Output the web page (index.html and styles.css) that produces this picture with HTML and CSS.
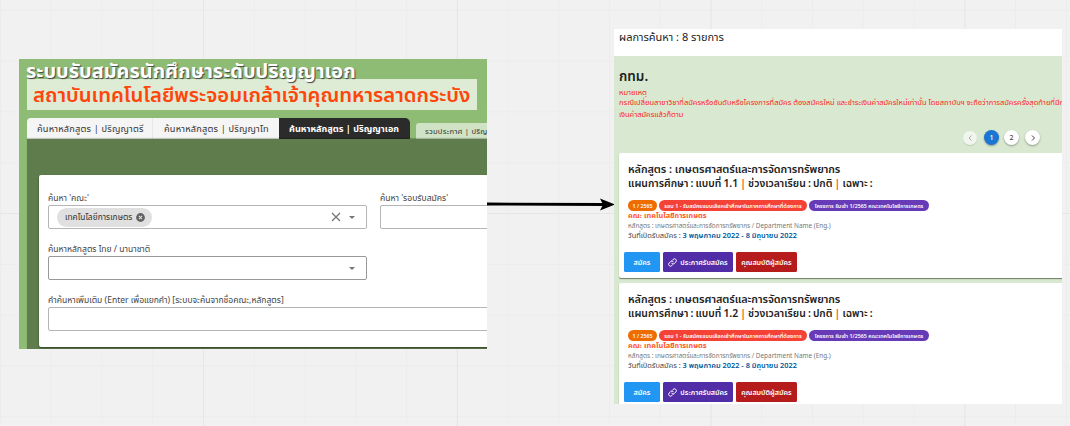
FILE: index.html
```html
<!DOCTYPE html>
<html lang="th">
<head>
<meta charset="utf-8">
<title>ระบบรับสมัครนักศึกษาระดับปริญญาเอก</title>
<link rel="stylesheet" href="styles.css">
</head>
<body>
<svg width="0" height="0" class="defs">
  <symbol id="link" viewBox="0 0 24 24"><g fill="none" stroke="currentColor" stroke-width="2.6" stroke-linecap="round"><path d="M10 14.500a5 5 0 0 0 7.200 0l3.600-3.700a5 5 0 0 0-7.100-7.100L11.500 5.900"/><path d="M14 9.500a5 5 0 0 0-7.200 0l-3.600 3.700a5 5 0 0 0 7.100 7.100l2.200-2.200"/></g></symbol>
</svg>
<main class="board">
  <section class="frame search">
    <header class="hero">
      <h1 class="hero-title">ระบบรับสมัครนักศึกษาระดับปริญญาเอก</h1>
      <p class="hero-org">สถาบันเทคโนโลยีพระจอมเกล้าเจ้าคุณทหารลาดกระบัง</p>
    </header>
    <nav class="tabs">
      <span class="tab first">ค้นหาหลักสูตร | ปริญญาตรี</span>
      <span class="tab second">ค้นหาหลักสูตร | ปริญญาโท</span>
      <span class="tab active">ค้นหาหลักสูตร | ปริญญาเอก</span>
      <span class="tab news">รวมประกาศ | ปริญญาตรี</span>
    </nav>
    <div class="search-body">
      <form class="form">
        <div class="row">
          <div class="field half">
            <label class="label">ค้นหา 'คณะ'</label>
            <div class="input">
              <span class="pill">เทคโนโลยีการเกษตร
                <svg class="pill-x" viewBox="0 0 10 10"><circle cx="5" cy="5" r="4.900" fill="#616161"/><path d="M3.300 3.300l3.400 3.400M6.700 3.300L3.300 6.700" stroke="#e0e0e0" stroke-width="1.200"/></svg>
              </span>
              <svg class="clear" viewBox="0 0 10 10"><path d="M1 1l8 8M9 1L1 9" stroke="#757575" stroke-width="1.200"/></svg>
              <svg class="caret" viewBox="0 0 6 3"><path d="M0 0h6L3 3z" fill="#757575"/></svg>
            </div>
          </div>
          <div class="field wide">
            <label class="label">ค้นหา 'รอบรับสมัคร'</label>
            <div class="input"></div>
          </div>
        </div>
        <div class="row">
          <div class="field half">
            <label class="label">ค้นหาหลักสูตร ไทย / นานาชาติ</label>
            <div class="input dark">
              <svg class="caret" viewBox="0 0 6 3"><path d="M0 0h6L3 3z" fill="#757575"/></svg>
            </div>
          </div>
        </div>
        <div class="row">
          <div class="field full">
            <label class="label">คำค้นหาเพิ่มเติม (Enter เพื่อแยกคำ) [ระบบจะค้นจากชื่อคณะ,หลักสูตร]</label>
            <div class="input"></div>
          </div>
        </div>
      </form>
    </div>
  </section>

  <svg class="arrow" viewBox="0 0 130 16"><path d="M0 8L118 8.500" stroke="#000" stroke-width="2.800"/><path d="M128 8.500L113 2.500L116 8.500L113 14.500z"/></svg>

  <section class="frame results">
    <header class="count">ผลการค้นหา : 8 รายการ</header>
    <div class="results-body">
      <h2 class="city">กทม.</h2>
      <div class="note">
        <p class="note-head"><span>หมายเหตุ</span></p>
        <p>กรณีเปลี่ยนสาขาวิชาที่สมัครหรืออันดับหรือโครงการที่สมัคร ต้องสมัครใหม่ และชำระเงินค่าสมัครใหม่เท่านั้น โดยสถาบันฯ จะถือว่าการสมัครครั้งสุดท้ายที่มีการชำระ</p>
        <p>เงินค่าสมัครแล้วก็ตาม</p>
      </div>
      <div class="pager">
        <span class="page off"><svg viewBox="0 0 6 8"><path d="M4.500 1.500L2 4l2.500 2.500" fill="none" stroke="currentColor"/></svg></span>
        <span class="page on">1</span>
        <span class="page">2</span>
        <span class="page next"><svg viewBox="0 0 6 8"><path d="M2 1.500l2.500 2.500L2 6.500" fill="none" stroke="currentColor"/></svg></span>
      </div>
      <article class="card">
        <h3 class="course">หลักสูตร : เกษตรศาสตร์และการจัดการทรัพยากร</h3>
        <h3 class="course plan">แผนการศึกษา : แบบที่ 1.1 <i>|</i> ช่วงเวลาเรียน : ปกติ <i>|</i> เฉพาะ :</h3>
        <div class="chips"><span class="chip year">1 / 2565</span><span class="chip round">รอบ 1 - รับสมัครแบบเลือกเข้าศึกษาในภาคการศึกษาที่ต้องการ</span><span class="chip project">โครงการ รับเข้า 1/2565 คณะเทคโนโลยีการเกษตร</span></div>
        <p class="faculty">คณะ เทคโนโลยีการเกษตร</p>
        <p class="dept">หลักสูตร : เกษตรศาสตร์และการจัดการทรัพยากร / Department Name (Eng.)</p>
        <p class="open">วันที่เปิดรับสมัคร : <b>3 พฤษภาคม 2022 - 8 มิถุนายน 2022</b></p>
        <div class="actions"><span class="btn apply">สมัคร</span><span class="btn announce"><svg class="link"><use href="#link"/></svg>ประกาศรับสมัคร</span><span class="btn qualify">คุณสมบัติผู้สมัคร</span></div>
      </article>
      <article class="card">
        <h3 class="course">หลักสูตร : เกษตรศาสตร์และการจัดการทรัพยากร</h3>
        <h3 class="course plan">แผนการศึกษา : แบบที่ 1.2 <i>|</i> ช่วงเวลาเรียน : ปกติ <i>|</i> เฉพาะ :</h3>
        <div class="chips"><span class="chip year">1 / 2565</span><span class="chip round">รอบ 1 - รับสมัครแบบเลือกเข้าศึกษาในภาคการศึกษาที่ต้องการ</span><span class="chip project">โครงการ รับเข้า 1/2565 คณะเทคโนโลยีการเกษตร</span></div>
        <p class="faculty">คณะ เทคโนโลยีการเกษตร</p>
        <p class="dept">หลักสูตร : เกษตรศาสตร์และการจัดการทรัพยากร / Department Name (Eng.)</p>
        <p class="open">วันที่เปิดรับสมัคร : <b>3 พฤษภาคม 2022 - 8 มิถุนายน 2022</b></p>
        <div class="actions"><span class="btn apply">สมัคร</span><span class="btn announce"><svg class="link"><use href="#link"/></svg>ประกาศรับสมัคร</span><span class="btn qualify">คุณสมบัติผู้สมัคร</span></div>
      </article>
    </div>
  </section>
</main>
</body>
</html>
```
FILE: styles.css
```css
* { box-sizing: border-box; margin: 0; padding: 0; }
body { font-family: "Noto Sans Thai", "Noto Sans", sans-serif; white-space: nowrap; overflow: hidden; }
.defs { position: absolute; }

.board {
  position: relative; width: 1070px; height: 426px; overflow: hidden;
  background-color: #f1f1f1;
  background-image:
    linear-gradient(90deg, #e6e6e6 1px, transparent 1px),
    linear-gradient(#e6e6e6 1px, transparent 1px),
    linear-gradient(90deg, #ececec 1px, transparent 1px),
    linear-gradient(#ececec 1px, transparent 1px);
  background-size: 253.800px 426px, 1070px 254px, 50.760px 426px, 1070px 50.800px;
  background-position: 203px 0, 0 213px, 203px 0, 0 213px;
}
.frame { position: absolute; overflow: hidden; }

/* search screen */
.search { left: 19px; top: 59px; width: 468px; height: 290px; background: #8fbc74; }
.hero { height: 51px; padding-left: 8px; }
.hero-title { height: 20px; line-height: 26px; font-size: 19.950px; font-weight: 700; color: #fff; text-shadow: 1px 1px 1px #444; position: relative; margin-left: -1px; }
.hero-org { width: 450px; height: 31px; padding-left: 6px; line-height: 33px; font-size: 20.300px; font-weight: 600; color: #ff4509; background: #deebd5; }
.tabs { display: flex; align-items: flex-end; height: 29px; padding-left: 8px; }
.tab { height: 21px; line-height: 23px; padding-left: 10px; font-size: 9.200px; letter-spacing: .2px; color: #333; background: #f5f5f5; flex: none; }
.tab.first { width: 126px; border-radius: 4px 0 0 0; border-right: 1px solid #e8e8e8; }
.tab.second { width: 126px; padding-left: 11px; }
.tab.active { width: 131px; border-radius: 0 5px 0 0; background: #2b2b2b; color: #fff; font-weight: 700; font-size: 9.150px; letter-spacing: 0; }
.tab.news { height: 16px; line-height: 17px; margin-left: 6px; padding-left: 9px; font-size: 7.700px; background: #d0e4c5; width: 120px; border-radius: 3px 0 0 0; }
.search-body { margin-left: 8px; height: 210px; padding: 36px 0 0 12px; background: #5f7d4c; box-shadow: 0 -1px 1px rgba(0,0,0,.2); position: relative; }
.form { width: 470px; height: 172px; padding: 16px 0 0 9px; background: #fff; border-radius: 2px; box-shadow: 0 1px 2px rgba(0,0,0,.5); }
.row { display: flex; gap: 13px; height: 51px; }
.field { flex: none; }
.half { width: 319px; }
.wide { width: 300px; }
.full { width: 480px; }
.label { display: block; height: 14px; line-height: 16px; font-size: 8.550px; color: #444; }
.input { display: flex; align-items: center; height: 24px; border: 1px solid #b5b5b5; border-radius: 2px; padding: 0 11px 0 8px; }
.input.dark { border-color: #999; }
.pill { display: flex; align-items: center; gap: 4px; width: 95px; height: 19px; padding-left: 8px; border-radius: 10px; background: #e0e0e0; font-size: 8.400px; color: #333; }
.pill-x { width: 9px; height: 9px; flex: none; }
.clear { width: 10px; height: 10px; margin-left: auto; margin-right: 8px; }
.caret { width: 6px; height: 3px; }
.dark .caret { margin-left: auto; }

/* arrow between the screens */
.arrow { position: absolute; left: 487px; top: 196px; width: 130px; height: 16px; }

/* results screen */
.results { left: 614px; top: 29px; width: 448px; height: 375px; background: #d9e9d1; }
.count { height: 27px; padding-left: 5px; line-height: 17px; font-size: 11px; color: #222; background: #fff; }
.results-body { padding: 10px 0 0 5px; }
.city { height: 25px; line-height: 22px; font-size: 13.500px; font-weight: 600; color: #212121; }
.note { height: 33px; font-size: 7.500px; color: #f22; line-height: 12px; }
.note-head { display: flex; align-items: flex-end; height: 6px; line-height: 8px; overflow: hidden; }
.note p + p { height: 11.500px; }
.pager { display: flex; align-items: center; height: 15px; margin: 6px 0 8px 344px; }
.page { display: flex; align-items: center; justify-content: center; width: 15px; height: 15px; margin-right: 5px; border-radius: 50%; background: #fff; color: #444; font-size: 7px; font-weight: 500; box-shadow: 0 1px 2px rgba(0,0,0,.35); }
.page svg { width: 6px; height: 8px; }
.page.off { width: 14px; height: 14px; margin-right: 7px; background: #f0f5ed; color: #aaa; box-shadow: 0 1px 1px rgba(0,0,0,.12); }
.page.on { background: #1976d2; color: #fff; }
.page.next { margin-left: 1px; }
.card { width: 460px; height: 124.500px; margin-bottom: 5.500px; padding: 9px 0 0 9px; background: #fff; border-radius: 2px; box-shadow: 0 1px 1px rgba(60,80,50,.7); }
.course { height: 14.500px; line-height: 15.500px; font-size: 10.850px; font-weight: 600; letter-spacing: -.05px; color: #212121; }
.plan { font-size: 10.400px; word-spacing: -.600px; letter-spacing: 0; }
.plan i { font-style: normal; font-weight: 700; color: #ff5722; }
.chips { display: flex; gap: 2px; margin-top: 9px; height: 11px; }
.chip { display: flex; align-items: center; justify-content: center; height: 11px; border-radius: 6px; color: #fff; font-size: 5.350px; font-weight: 600; }
.year { width: 29px; background: #ef6c00; font-size: 5.300px; }
.round { width: 148px; background: #f44336; font-size: 5.500px; }
.project { width: 120px; background: #673ab7; }
.faculty { height: 10px; line-height: 10px; font-size: 7.300px; font-weight: 700; color: #ff5722; }
.dept { height: 10px; line-height: 10px; font-size: 6.400px; color: #777; }
.open { height: 11px; line-height: 10px; font-size: 7.400px; color: #444; }
.open b { font-size: 7.400px; font-weight: 600; color: #01579b; }
.actions { display: flex; gap: 3px; margin: 10px 0 0 -4px; }
.btn { display: flex; align-items: center; justify-content: center; height: 20px; border-radius: 1.500px; color: #fff; font-size: 7.100px; font-weight: 600; }
.apply { width: 36px; background: #2196f3; }
.announce { width: 70px; gap: 3px; background: #512da8; }
.qualify { width: 61px; background: #b71c1c; }
.link { width: 9px; height: 9px; }
```
